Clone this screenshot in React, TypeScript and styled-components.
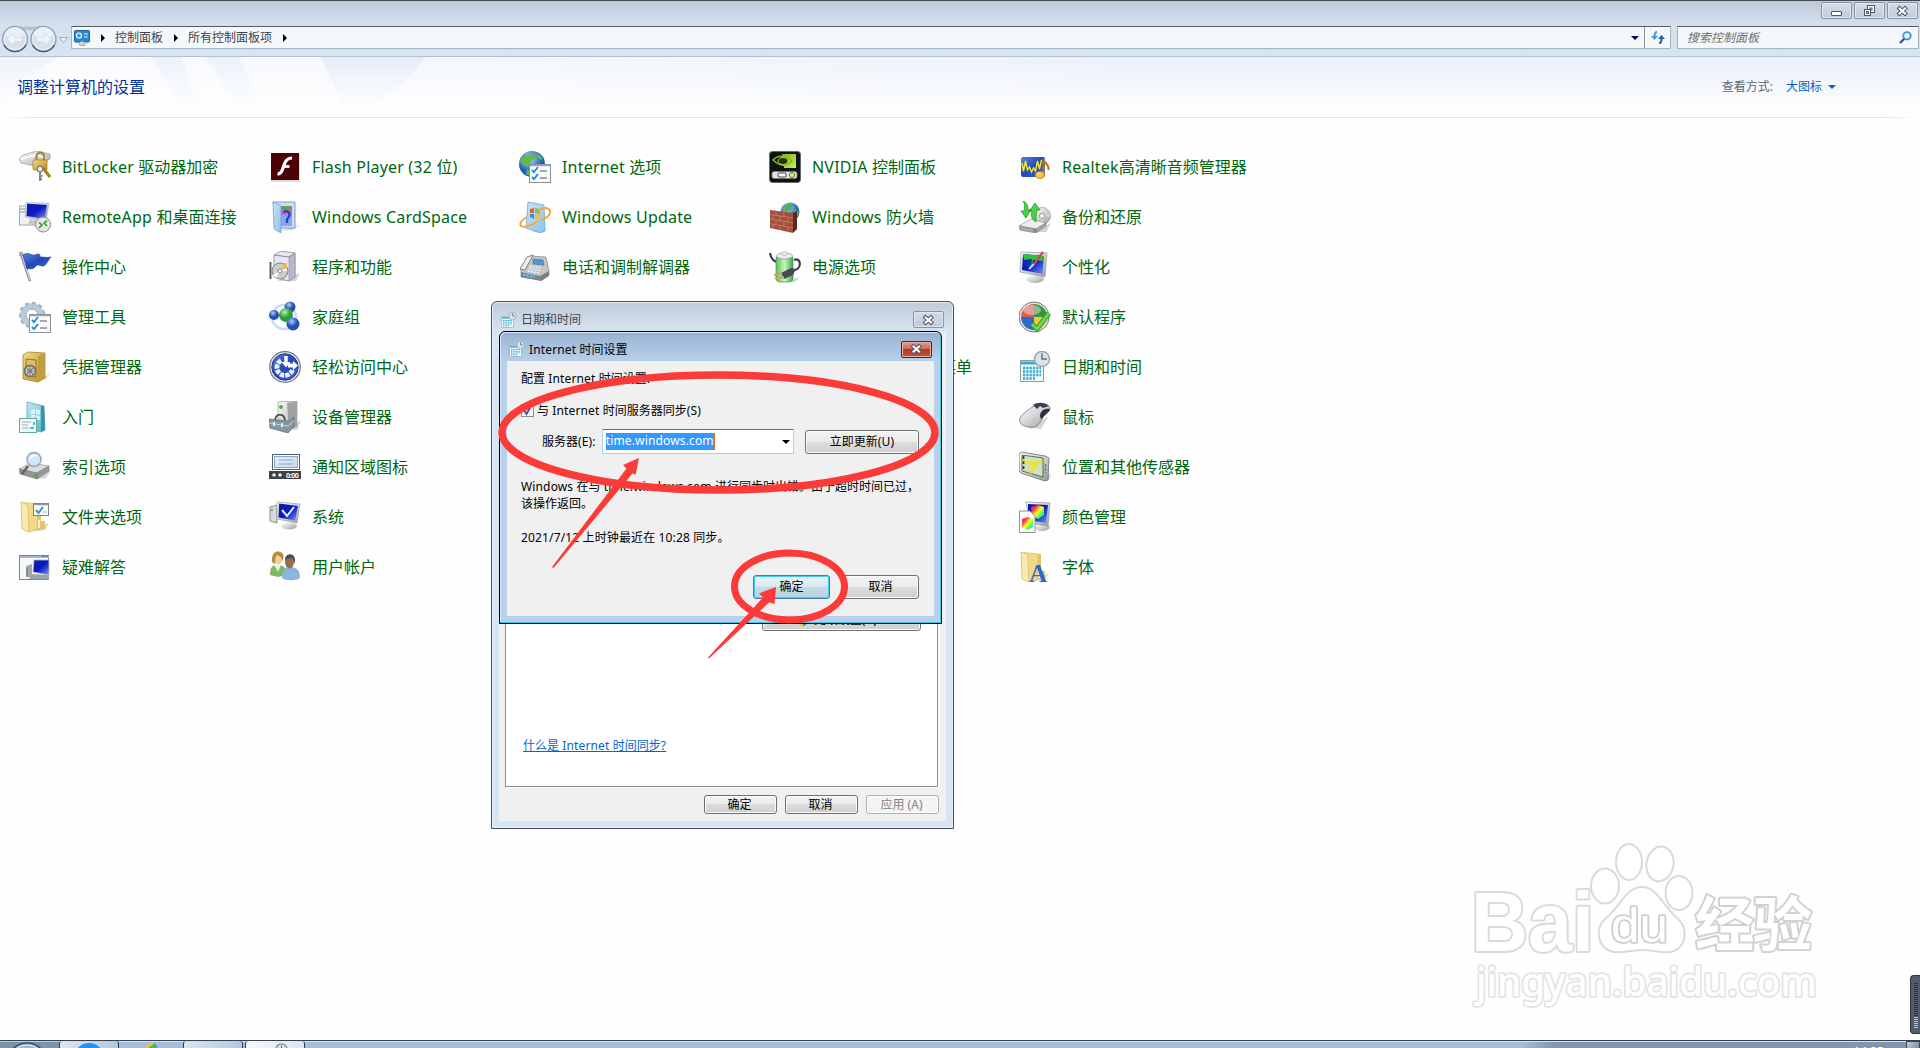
import type { ReactNode } from 'react';
import styled, { createGlobalStyle, css } from 'styled-components';

const fonts = `'Noto Sans', 'Noto Sans CJK SC', sans-serif`;

const icons: Record<string, ReactNode> = {
  bitlocker: (
    <>
      <path d="M0 8 L4 4 L18 0 L31 3 V8 L16 15 L2 12Z" fill="url(#silver)" stroke="#9a9a9a" strokeWidth=".7" />
      <path d="M2 8 L17 4 L27 7" fill="none" stroke="#fff" strokeWidth="1.6" />
      <path d="M17.500 10V5.500a3.800 3.800 0 0 1 7.600 0V10" fill="none" stroke="#a98a38" strokeWidth="2.200" />
      <rect x="14" y="9" width="14" height="10" rx="1" fill="url(#gold)" stroke="#a17b26" strokeWidth=".7" />
      <path d="M24 17 L31 26" stroke="#a87f1d" strokeWidth="3" />
      <circle cx="21" cy="18" r="2.800" fill="#eee" stroke="#777" strokeWidth="1.200" />
      <path d="M21 20V30M21 25h2.500M21 28h2" stroke="#888" strokeWidth="2" />
    </>
  ),
  flash: (
    <>
      <rect x="2" y="3" width="29" height="28" fill="#bbb" opacity=".5" />
      <rect x="2" y="2" width="28" height="27" fill="#4a0204" />
      <path d="M23 7c-6 0-7.500 5-9 10-1 3.500-2 6-5.500 6" fill="none" stroke="#fff" strokeWidth="3.200" />
      <path d="M13.500 15.500h7" stroke="#fff" strokeWidth="2.800" />
    </>
  ),
  internet: (
    <>
      <circle cx="13" cy="13" r="13" fill="url(#globe)" />
      <path d="M5 4c4 2 6-2 10-1l2 4-5 3-3 6-5-2-3-4zM17 2l5 3 2 5-5-3zM8 18l4 2-1 5-4-2z" fill="#63b848" />
      <Checklist />
    </>
  ),
  nvidia: (
    <>
      <rect x=".5" y=".5" width="31" height="31" rx="3" fill="#111" stroke="#666" />
      <path d="M13 3H27V17H15z" fill="url(#lime)" />
      <path d="M4 9q8-8 19 1q-8 9-19-1Z" fill="none" stroke="#86b820" strokeWidth="1.600" />
      <ellipse cx="14" cy="10" rx="5" ry="3.500" fill="#25330b" stroke="#a8d838" />
      <rect x="3" y="20.500" width="25" height="7" rx="2" fill="#e4e4e4" stroke="#777" />
      <rect x="9" y="22" width="8" height="4" rx="1" fill="#fff" stroke="#444" />
      <circle cx="23" cy="24" r="2.600" fill="#cfe9a0" stroke="#4d8c16" />
    </>
  ),
  realtek: (
    <>
      <rect x="2" y="6" width="24" height="20" rx="2" fill="url(#blue)" />
      <path d="M3 12l1.500 8 2-10 2 9 2-3 2 5 2-4 2 3 2-10 2 8 2-9" fill="none" stroke="#eceb2b" strokeWidth="1.400" />
      <path d="M24.500 24V8c1 5 6 5 5 11" fill="none" stroke="#b57a1c" strokeWidth="2" />
      <ellipse cx="21" cy="24" rx="4.500" ry="3.500" fill="url(#amber)" stroke="#b57a1c" strokeWidth=".7" />
    </>
  ),
  remote: (
    <>
      <rect x=".5" y="5" width="22" height="19" fill="#f2f2f2" stroke="#a0a8b0" />
      <path d="M1 8H7M1 11H6" stroke="#a7b3c6" strokeWidth="1.500" />
      <path d="M7 1 30 2.500 27 20 6 16Z" fill="url(#silver)" stroke="#aaa" strokeWidth=".6" />
      <path d="M8 2.500 28 4 25.500 18 7.500 15Z" fill="url(#screen)" />
      <path d="M11 18l9 2 1 6-12-2z" fill="#c4c6c8" />
      <circle cx="24" cy="23.500" r="7.500" fill="#e6e6e6" stroke="#8c8c8c" />
      <path d="M20 21.500l3 2.500-3 3M28 19.500l-3 2.500 3 3" fill="none" stroke="#2c9a2c" strokeWidth="1.600" />
    </>
  ),
  cardspace: (
    <>
      <path d="M9 30 31 24 24 29Z" fill="#bbb" opacity=".5" />
      <path d="M4 1H26V27H8Z" fill="#cfdcf8" stroke="#8098d0" />
      <rect x="11" y="5" width="12" height="4" fill="#5ca64a" />
      <rect x="11" y="9" width="12" height="5" fill="#c86ac4" />
      <path d="M12 14h11v11H12z" fill="#82a9ee" />
      <path d="M15 12c0-3 6-2 5.500 2s-3.500 3-2.500 6v2" fill="none" stroke="#2745b8" strokeWidth="2.400" />
      <path d="M4 1 12 5V32L5 28Z" fill="url(#sky)" stroke="#7f9de0" strokeWidth=".8" />
    </>
  ),
  update: (
    <>
      <path d="M12 31l17-4-5 4z" fill="#aaa" opacity=".5" />
      <path d="M9 1l16 3 1 26-5 2L7 27Z" fill="url(#sky)" stroke="#72a7cc" strokeWidth=".8" />
      <WinFlag x={11} y={7} />
      <path d="M19 10c7-5 13-3 12 2-1 4-6 6-9 7M8 16c-5 3-8 6-6 9 3 2 10 0 17-5" fill="none" stroke="#f3a83c" strokeWidth="2" />
    </>
  ),
  firewall: (
    <>
      <circle cx="21" cy="11" r="9.500" fill="url(#globe)" />
      <path d="M15 4c3 1 5-2 9 0l-2 5-6 2zM26 8l4 3-1 5-4-3z" fill="#58b048" />
      <path d="M1 9 24 12V32L1 27Z" fill="#a34f3d" />
      <path d="M24 12l4-2v18l-4 4z" fill="#5d281e" />
      <path d="M1 13.500 24 17M1 18 24 22M1 22.500 24 27M7 10v4M15 11v5M4 14v4M11 15v5M19 17v5M7 19v4M15 21v4M4 23v4M11 25v4M19 26v5" stroke="#c98a76" strokeWidth=".7" fill="none" />
    </>
  ),
  backup: (
    <>
      <path d="M15 31 32 22 27 31Z" fill="#aaa" opacity=".5" />
      <circle cx="23" cy="15" r="8.500" fill="url(#silver)" stroke="#999" strokeWidth=".7" />
      <path d="M23 15l8-3v4zM23 15l-3 8 4 0z" fill="#e8c6d4" />
      <circle cx="23" cy="15" r="2.500" fill="#fff" stroke="#999" />
      <path d="M0 25 12 18 27 22 17 28Z" fill="#eee" stroke="#999" strokeWidth=".7" />
      <path d="M0 25 17 28V32L1 29Z M17 28 27 22V25L17 32Z" fill="#a9a9a9" stroke="#777" strokeWidth=".6" />
      <path d="M14 28.500h2v2h-2z" fill="#2eb82e" />
      <path d="M4 0c4 1 5 5 5 9l3-1-5 9-5-7 3 0C6 6 6 3 4 0Z M17 21c-5-3-5-7-4-11l-3 1 6-9 5 7-3 0c-1 4-1 8-1 12Z" fill="#4fd04a" stroke="#229a26" strokeWidth=".8" />
    </>
  ),
  flag: (
    <>
      <path d="M2 3 11 30" stroke="#8e9297" strokeWidth="2.600" />
      <path d="M2.500 3 11 29" stroke="#e0e3e6" strokeWidth="1" />
      <circle cx="2" cy="3" r="2" fill="#b5b9bd" stroke="#777" strokeWidth=".6" />
      <path d="M4 4c5-4 8 1 12 0 4-2 5-1 5 2 4 0 7 1 11 0-3 3-5 9-8 9-4 0-5-3-8 1-3 3-5 1-8 2Z" fill="url(#blue)" stroke="#2343a4" strokeWidth=".7" />
    </>
  ),
  programs: (
    <>
      <path d="M8 30l23-8-4 8z" fill="#aaa" opacity=".5" />
      <path d="M5 4 12 0 26 2V26L20 30 5 26Z" fill="#e9e8f2" stroke="#8c8a9c" strokeWidth=".8" />
      <path d="M20 6 26 2V26L20 30Z" fill="#b9b7cc" stroke="#8c8a9c" strokeWidth=".6" />
      <path d="M5 4 20 6 26 2" fill="none" stroke="#8c8a9c" />
      <path d="M1.500 11v17" fill="none" stroke="#555" strokeWidth="1.800" />
      <circle cx="11" cy="20" r="8" fill="#c9cfca" stroke="#7f867f" />
      <path d="M11 20l7-5v5zM11 20l-7 4 3 3z" fill="#fff" />
      <path d="M14 12h4v5l-5 2z" fill="#efb45a" />
      <circle cx="11" cy="20" r="2" fill="#fff" stroke="#888" />
    </>
  ),
  phone: (
    <>
      <path d="M2 17 11 5 27 6 30 20 30 24 23 29 2 26Z" fill="#c3c6c9" stroke="#8d8f92" strokeWidth=".8" />
      <path d="M14 8l10 1 1 5-11-1z" fill="#4a9ade" stroke="#557" strokeWidth=".5" />
      <path d="M8 6 14 4 6 19 1 18Z" fill="#efefef" stroke="#777" strokeWidth=".9" />
      <path d="M11 15l11 2M10 17.500l11 2M9 20l11 2" stroke="#f4f4f4" strokeWidth="1.300" strokeDasharray="2 1" />
      <path d="M2 21 21 25 30 20V25L22 30 2 26Z" fill="#7b8086" />
      <path d="M4 23.500l12 2.500" stroke="#5fb9ea" strokeWidth="2.800" strokeDasharray="2.500 1" />
    </>
  ),
  power: (
    <>
      <path d="M12 31l19-5-5 5z" fill="#aaa" opacity=".5" />
      <path d="M1 2c1 6 3 8 7 9M25 9c7-3 8 8 1 10" fill="none" stroke="#3a3d4d" strokeWidth="2.200" />
      <rect x="7" y="4" width="17" height="27" rx="4" fill="url(#battery)" stroke="#4b9450" strokeWidth=".7" />
      <ellipse cx="15.500" cy="5" rx="8" ry="3" fill="#e8ebf0" stroke="#8b95a0" strokeWidth=".7" />
      <ellipse cx="15.500" cy="2.500" rx="3" ry="1.500" fill="#fff" stroke="#8b95a0" strokeWidth=".7" />
      <path d="M12 22 22 17 27 18 24 24 15 28Z" fill="#464953" />
      <path d="M5 24 13 22M6 27.500 15 26" stroke="#c8a36c" strokeWidth="2.200" />
    </>
  ),
  personalize: (
    <>
      <ellipse cx="16" cy="28" rx="9" ry="4" fill="url(#silver)" />
      <path d="M2 1 28 2 26 26 1 21Z" fill="url(#silver)" stroke="#a1a1a1" strokeWidth=".8" />
      <path d="M4 3 25 5 23.500 23 3 19Z" fill="url(#screen)" />
      <path d="M4 3 25 5 24 10 14 9 13 16 6 14Z" fill="#2fc23a" />
      <path d="M4 9 13 8 12 15 5 14Z" fill="#0b2bb0" />
      <path d="M24 1 15 13" stroke="#d2454e" strokeWidth="2.200" />
      <path d="M15 13 10 18" stroke="#c8d4ea" strokeWidth="2" />
    </>
  ),
  admin: (
    <>
      <circle cx="13" cy="14" r="9" fill="none" stroke="#b9cbdb" strokeWidth="5.500" />
      <circle cx="13" cy="14" r="12" fill="none" stroke="#a2b8cb" strokeWidth="2.500" strokeDasharray="4 3" />
      <circle cx="13" cy="14" r="6" fill="#fff" stroke="#8aa4bc" />
      <Checklist />
    </>
  ),
  homegroup: (
    <>
      <circle cx="15" cy="16" r="12" fill="none" stroke="#c9dcf0" strokeWidth="2.500" />
      <circle cx="21" cy="6" r="5.500" fill="url(#ball)" />
      <circle cx="5" cy="14" r="5" fill="url(#ball)" />
      <circle cx="17" cy="14" r="7" fill="url(#greenBall)" />
      <circle cx="24" cy="23" r="6.500" fill="url(#ball)" />
    </>
  ),
  defaults: (
    <>
      <circle cx="15" cy="16" r="15" fill="#e4e4e4" stroke="#777" />
      <path d="M15 3v13H2A13 13 0 0 1 15 3Z" fill="#e05b4a" />
      <path d="M15 3v13h13A13 13 0 0 0 15 3Z" fill="#3f9040" />
      <path d="M15 29V16H2a13 13 0 0 0 13 13Z" fill="#2d6cc4" />
      <path d="M15 29V16h13a13 13 0 0 1-13 13Z" fill="#f2c934" />
      <ellipse cx="13" cy="9" rx="9" ry="5" fill="#fff" opacity=".4" />
      <path d="M13 23l5 5L30 12" fill="none" stroke="#2a9a22" strokeWidth="5" />
      <path d="M13 23l5 5L30 12" fill="none" stroke="#6cd84e" strokeWidth="3" />
    </>
  ),
  safe: (
    <>
      <path d="M14 31 31 23 26 28Z" fill="#aaa" opacity=".5" />
      <path d="M4 4 9 1 26 2V27L19 31 4 28Z" fill="url(#gold)" stroke="#a48327" strokeWidth=".8" />
      <path d="M19 5V31L26 27V2Z" fill="#c19d42" />
      <path d="M7 8 17 9V26L7 25Z" fill="#dcbf6a" stroke="#91752b" />
      <circle cx="11" cy="20" r="5.500" fill="#ddd" stroke="#77746c" strokeWidth="1.800" />
      <path d="M11 14V26M5 20H17M7 16l8 8M15 16l-8 8" stroke="#817e76" strokeWidth="1.200" />
    </>
  ),
  ease: (
    <>
      <circle cx="16" cy="16" r="15.300" fill="#ececec" stroke="#707478" strokeWidth="1.200" />
      <circle cx="16" cy="16" r="13.200" fill="url(#blue)" stroke="#1a389f" />
      <path d="M12 9.500a8 8 0 1 0 11.500 9.500" fill="none" stroke="#eef3ff" strokeWidth="4.800" strokeDasharray="4.300 1" />
      <path d="M17 5V13" stroke="#fff" strokeWidth="3.500" />
      <path d="M12.500 11h9L17 16.500zM19 12.500h5V10l5 4.500-5 4.500v-2.500h-5z" fill="#fff" />
    </>
  ),
  datetime: <Calendar />,
  start: (
    <>
      <path d="M8 1 25 5 26 29 22 31 8 28Z" fill="url(#teal)" stroke="#5ca9b8" strokeWidth=".8" />
      <path d="M22 5 25 5 26 29 22 31Z" fill="#3596aa" />
      <path d="M12 9l4-1v5h-4zM17 8l4 1v5l-4-1zM12 14h4v5l-4-2zM17 14l4 1v4l-4 0z" fill="#d9f3f7" />
      <rect x=".5" y="17.500" width="17" height="14" fill="#eef8f8" stroke="#6aa6a0" />
      <path d="M3 21h9M3 24h6M3 27h7" stroke="#9caead" />
      <path d="M14 21h2v3h-2zM11 26h4v2h-4z" fill="#3dc8e8" />
    </>
  ),
  device: (
    <>
      <path d="M20 28l12-9-4 10z" fill="#aaa" opacity=".5" />
      <path d="M9 1 28 0V25L20 29 9 26Z" fill="url(#silver)" stroke="#999" strokeWidth=".7" />
      <path d="M18 2 28 0V25L20 29Z" fill="#a2a2a2" />
      <circle cx="12" cy="6" r="2" fill="#46b52c" />
      <path d="M6 19c1-7 9-7 10 0" fill="none" stroke="#3b3b3b" strokeWidth="1.600" />
      <path d="M0 18 19 20 25 16V25L19 32 1 27Z" fill="#8398a4" stroke="#576a76" strokeWidth=".7" />
      <path d="M0 22 19 25 25 20" fill="none" stroke="#c6d3da" />
      <path d="M5 21v4M13 22v4" stroke="#e8edef" strokeWidth="2" />
    </>
  ),
  mouse: (
    <>
      <path d="M8 27l22-12-8 13z" fill="#999" opacity=".4" />
      <path d="M15 5c4-4 17-2 16 3-1 4-6 5-8 10-3 7-7 9-13 8C3 25-1 22 1 17 4 12 9 9 15 5Z" fill="url(#silver)" stroke="#777" strokeWidth=".8" />
      <path d="M31 8c-6-1-9 2-10 6 0 3 1 4 2 4 2-4 7-6 8-10Z" fill="#2c3044" />
      <path d="M14 4c4-3 12-3 16 1l-6 2-3-2-3 3z" fill="#3c4054" />
    </>
  ),
  index: (
    <>
      <path d="M18 28l14-9-5 8z" fill="#aaa" opacity=".5" />
      <path d="M0 18 12 12 30 15 18 22Z" fill="#dcdcdc" stroke="#999" strokeWidth=".7" />
      <path d="M0 18 18 22V28L1 23Z M18 22 30 15V20L18 28Z" fill="#969696" stroke="#757575" strokeWidth=".6" />
      <path d="M14.500 23h2v3h-2z" fill="#4db52c" />
      <circle cx="15" cy="8.500" r="7" fill="#cfe6fb" fillOpacity=".9" stroke="#97a6b4" strokeWidth="1.500" />
      <path d="M11 8c1-3 4-4 7-3" fill="none" stroke="#fff" strokeWidth="1.500" />
      <path d="M9 15 3 23" stroke="#606468" strokeWidth="2.500" />
    </>
  ),
  notify: (
    <>
      <rect x="3.500" y="3.500" width="27" height="15" fill="#fff" stroke="#4d5e78" />
      <rect x="5.500" y="5.500" width="23" height="11" fill="url(#pale)" stroke="#8fa4c0" />
      <path d="M10 9h14M10 13h14" stroke="#8aa6cc" />
      <rect x="0" y="20" width="32" height="8" fill="#3e4146" />
      <circle cx="5" cy="24" r="1.800" fill="#eee" />
      <circle cx="11" cy="24" r="1.800" fill="#eee" />
      <text x="17" y="27" fontSize="7.500" fontFamily="Liberation Sans" fontWeight="700" fill="#fff" textLength="13">0:00</text>
    </>
  ),
  sensors: (
    <>
      <path d="M24 30l8-8-1 6z" fill="#aaa" opacity=".5" />
      <path d="M2 1 26 5 30 7 29 29 26 30 2 22 0 20V4Z" fill="url(#silver)" stroke="#777" strokeWidth=".9" />
      <path d="M3 4 24 7V26L3 20Z" fill="#cfe2b8" stroke="#454a44" strokeWidth=".8" />
      <path d="M3 10 14 13 23 10M19 11 11 22" fill="none" stroke="#f2e12c" strokeWidth="2.800" />
      <path d="M4.500 5v15" stroke="#3a4038" strokeWidth="1.800" strokeDasharray="3 2" />
      <path d="M26.500 13v9" stroke="#777" strokeWidth="1.500" strokeDasharray="3 1" />
    </>
  ),
  folder: (
    <>
      <path d="M8 31l22-9-4 7z" fill="#aaa" opacity=".5" />
      <Folder />
      <rect x="14.500" y="2.500" width="15" height="12" fill="#fbfbfb" stroke="#77808c" />
      <path d="M15 3.500h15" stroke="#8d96a8" strokeWidth="1.500" />
      <path d="M17 9l2.500 3L24 6" fill="none" stroke="#2b9ad2" strokeWidth="2" />
      <path d="M24 11h4" stroke="#aaa" />
    </>
  ),
  system: (
    <>
      <path d="M1 6 8 4V22L1 20Z" fill="#d8d8d8" stroke="#777" strokeWidth=".8" />
      <circle cx="3" cy="9" r="1" fill="#3cb52c" />
      <ellipse cx="20" cy="25" rx="8" ry="3.500" fill="url(#silver)" />
      <path d="M8 1 31 3 28 22 8 18Z" fill="url(#silver)" stroke="#a0a0a0" strokeWidth=".7" />
      <path d="M10 2.500 29 5 26 19.500 9.500 16.500Z" fill="url(#screen)" />
      <path d="M13 9l5 6 7-9" fill="none" stroke="#e7edfb" strokeWidth="2" />
    </>
  ),
  color: (
    <>
      <ellipse cx="23" cy="26" rx="8" ry="4" fill="url(#silver)" />
      <path d="M7 1 31 2 29 25 12 22Z" fill="url(#silver)" stroke="#999" strokeWidth=".8" />
      <path d="M9 3 29 4 27 22 9 19Z" fill="url(#screen)" />
      <path d="M12 6 19 4 25 6V14L19 18 13 15Z" fill="url(#rainbow)" />
      <path d="M.5 10H11L16 15V31.500H.5Z" fill="#fdfdfd" stroke="#888" strokeWidth=".9" />
      <path d="M3 18 9 16 14 18V26L9 29 3 26Z" fill="url(#rainbow)" />
    </>
  ),
  trouble: (
    <>
      <rect x=".5" y="4.500" width="29" height="24" fill="#f7f8fa" stroke="#7c848e" />
      <path d="M1 6h29" stroke="#a9b7cc" strokeWidth="2" />
      <path d="M23 5.500h6" stroke="#5a6a85" strokeDasharray="1.500 1" />
      <path d="M7 15l6-2v13H7z" fill="#a5a5a5" />
      <path d="M8 17v8" stroke="#4a8c4a" />
      <path d="M15 9H30V24L14 21Z" fill="url(#screen)" stroke="#bbb" strokeWidth=".8" />
      <path d="M12 23l18 1v4H10z" fill="#9ba3ad" />
    </>
  ),
  users: (
    <>
      <path d="M1 24c0-9 3-10 8-10s8 2 8 10l-8 2Z" fill="#7fb765" />
      <path d="M5 14l4 7 3-7z" fill="#e8f2dc" />
      <ellipse cx="9" cy="7" rx="5" ry="6.500" fill="#f0cf9d" />
      <path d="M3 11C2 0 9-1 13 2c3 3 1 7 0 8 0-4-3-5-5-6-2 2-2 6-2 9Z" fill="#b3913d" />
      <path d="M13 27c0-9 3-11 9-11s9 4 9 11c-3 3-15 3-18 0Z" fill="#88b5e1" />
      <ellipse cx="20.500" cy="11" rx="4.500" ry="6.500" fill="#9c6b48" />
      <path d="M16 9c0-7 9-8 10-1v5c-1-4-2-5-4-6-2 0-4 1-6 2Z" fill="#4b4c4e" />
    </>
  ),
  fonts: (
    <>
      <path d="M8 31l22-9-4 7z" fill="#aaa" opacity=".4" />
      <Folder />
      <text x="10" y="31" fontSize="25" fontFamily="Liberation Serif" fontWeight="700" fill="#2869d0">A</text>
    </>
  ),
};

interface Entry {
  icon: string;
  label: string;
}

// null keeps the cell of an entry that lies behind the open dialogs
const columns: (Entry | null)[][] = [
  [
    { icon: 'bitlocker', label: 'BitLocker 驱动器加密' },
    { icon: 'remote', label: 'RemoteApp 和桌面连接' },
    { icon: 'flag', label: '操作中心' },
    { icon: 'admin', label: '管理工具' },
    { icon: 'safe', label: '凭据管理器' },
    { icon: 'start', label: '入门' },
    { icon: 'index', label: '索引选项' },
    { icon: 'folder', label: '文件夹选项' },
    { icon: 'trouble', label: '疑难解答' },
  ],
  [
    { icon: 'flash', label: 'Flash Player (32 位)' },
    { icon: 'cardspace', label: 'Windows CardSpace' },
    { icon: 'programs', label: '程序和功能' },
    { icon: 'homegroup', label: '家庭组' },
    { icon: 'ease', label: '轻松访问中心' },
    { icon: 'device', label: '设备管理器' },
    { icon: 'notify', label: '通知区域图标' },
    { icon: 'system', label: '系统' },
    { icon: 'users', label: '用户帐户' },
  ],
  [
    { icon: 'internet', label: 'Internet 选项' },
    { icon: 'update', label: 'Windows Update' },
    { icon: 'phone', label: '电话和调制解调器' },
  ],
  [
    { icon: 'nvidia', label: 'NVIDIA 控制面板' },
    { icon: 'firewall', label: 'Windows 防火墙' },
    { icon: 'power', label: '电源选项' },
    null,
    { icon: 'notify', label: '任务栏和「开始」菜单' },
  ],
  [
    { icon: 'realtek', label: 'Realtek高清晰音频管理器' },
    { icon: 'backup', label: '备份和还原' },
    { icon: 'personalize', label: '个性化' },
    { icon: 'defaults', label: '默认程序' },
    { icon: 'datetime', label: '日期和时间' },
    { icon: 'mouse', label: '鼠标' },
    { icon: 'sensors', label: '位置和其他传感器' },
    { icon: 'color', label: '颜色管理' },
    { icon: 'fonts', label: '字体' },
  ],
];

export default function App() {
  return (
    <>
      <GlobalStyle />
      <Gradients />
      <Desktop>
        <TitleBar>
          <CaptionButton><CaptionGlyph kind="min" /></CaptionButton>
          <CaptionButton><CaptionGlyph kind="restore" /></CaptionButton>
          <CaptionButton><CaptionGlyph kind="close" /></CaptionButton>
        </TitleBar>
        <NavBar>
          <TravelButtons />
          <AddressBar>
            <Crumbs>
              <svg width="16" height="16" viewBox="0 0 16 16">
                <rect x=".5" y=".5" width="15" height="11.500" rx="1" fill="#2d8ad0" stroke="#1d5f9c" />
                <circle cx="5" cy="5.500" r="2.500" fill="none" stroke="#fff" strokeWidth="1.200" />
                <path d="M5 5.500V3l2.500 2.500z" fill="#f5a623" />
                <path d="M10 4h4M10 7h4" stroke="#d8ecfb" />
                <path d="M5 13.500c0-3 6-3 6 0v2H6z" fill="#d5d5d5" stroke="#888" strokeWidth=".6" />
              </svg>
              <CrumbArrow />
              <span>控制面板</span>
              <CrumbArrow />
              <span>所有控制面板项</span>
              <CrumbArrow />
            </Crumbs>
            <DownArrow $color="#000050" />
            <Refresh>
              <svg width="14" height="13" viewBox="0 0 14 13">
                <path d="M6 1C3.500 1 3.500 3 3.500 5.500" fill="none" stroke="#3f9ad8" strokeWidth="2" />
                <path d="M0 5h7L3.500 9z" fill="#3f9ad8" />
                <path d="M8 12c2.500 0 2.500-2 2.500-5" fill="none" stroke="#2d4fa8" strokeWidth="2" />
                <path d="M7 8h7l-3.500-4z" fill="#2d5fb0" />
              </svg>
            </Refresh>
          </AddressBar>
          <SearchBox>
            <span>搜索控制面板</span>
            <svg width="13" height="13" viewBox="0 0 13 13">
              <circle cx="8" cy="4.800" r="3.700" fill="#eaf5fd" stroke="#4596cf" strokeWidth="1.900" />
              <path d="M5.200 7.800 1 12" stroke="#2c4fa0" strokeWidth="2.200" />
            </svg>
          </SearchBox>
        </NavBar>
        <Banner>
          <Swoosh viewBox="0 0 480 60">
            <path d="M0 0H60Q20 20 0 60Z" fill="url(#haze)" opacity=".6" />
            <path d="M150 0H181Q188 22 204 60H180Q170 25 150 0Z" fill="url(#haze)" opacity=".7" />
            <path d="M205 0H239Q250 25 266 60H236Q225 25 205 0Z" fill="url(#haze)" opacity=".7" />
            <path d="M320 0H425Q400 40 345 60Q335 25 320 0Z" fill="url(#haze)" />
          </Swoosh>
          <PageTitle>调整计算机的设置</PageTitle>
          <ViewBy>
            查看方式:
            <ViewLink>大图标 <DownArrow $color="#0066cc" /></ViewLink>
          </ViewBy>
        </Banner>
        <Divider />
        <Items>
          {columns.map((column, i) => (
            <Column key={i}>
              {column.map((entry, j) =>
                entry ? (
                  <Item key={j}>
                    <svg width="32" height="32" viewBox="0 0 32 32">{icons[entry.icon]}</svg>
                    <Mixed text={entry.label} />
                  </Item>
                ) : (
                  <Item key={j} />
                )
              )}
            </Column>
          ))}
        </Items>
        <Taskbar>
          <StartArea>
            <svg width="32" height="7" viewBox="0 0 32 7">
              <ellipse cx="16" cy="15" rx="17" ry="14" fill="#9fb6cc" stroke="#2c5278" strokeWidth="1.500" />
              <ellipse cx="16" cy="15" rx="15" ry="12" fill="none" stroke="#e3eef8" />
            </svg>
          </StartArea>
          <TaskButton $width={60} $lit>
            <svg width="24" height="5" viewBox="0 0 24 5"><ellipse cx="12" cy="11" rx="13" ry="11" fill="#2390ee" /></svg>
          </TaskButton>
          <TaskButton $width={64}>
            <svg width="18" height="5" viewBox="0 0 18 6"><path d="M0 6 6 2 14 0V6Z" fill="#f0c62e" /><path d="M6 6 14 0 17 6Z" fill="#3db86a" /></svg>
          </TaskButton>
          <TaskButton $width={60} $lit />
          <TaskGap />
          <TaskButton $width={60} $lit $bright>
            <TaskIcon width="13" height="5" viewBox="0 0 13 5"><circle cx="6.500" cy="6.500" r="5.500" fill="#dde3e8" stroke="#8c979f" strokeWidth="1.500" /><path d="M6.500 2.500v3" stroke="#667" /></TaskIcon>
          </TaskButton>
          <Tray>
            <Clock>14:35</Clock>
            <ShowDesktop />
          </Tray>
        </Taskbar>

        <DateTimeDialog>
          <DialogTitle>
            <svg width="16" height="16" viewBox="0 0 32 32"><Calendar /></svg>
            <TitleText>日期和时间</TitleText>
            <CloseButton><CaptionGlyph kind="close" /></CloseButton>
          </DialogTitle>
          <DialogBody>
            <TabPanel>
              <ChangeButton>
                <svg width="14" height="14" viewBox="0 0 14 14">
                  <path d="M7 0 13 2v5c0 4-3 6-6 7-3-1-6-3-6-7V2z" fill="#3c79d0" />
                  <path d="M7 0v14C4 13 1 11 1 7h12V2z" fill="#f3cf3a" />
                </svg>
                <Mixed text="更改设置(C)..." />
              </ChangeButton>
              <HelpLink><Mixed text="什么是 Internet 时间同步?" /></HelpLink>
            </TabPanel>
            <DialogButtons>
              <SmallButton>确定</SmallButton>
              <SmallButton>取消</SmallButton>
              <SmallButton $disabled>应用 (A)</SmallButton>
            </DialogButtons>
          </DialogBody>
        </DateTimeDialog>

        <TimeSettingsDialog>
          <DialogTitle $active>
            <svg width="16" height="16" viewBox="0 0 32 32"><Calendar /></svg>
            <TitleText><Mixed text="Internet 时间设置" /></TitleText>
            <CloseButton $active><CaptionGlyph kind="close" /></CloseButton>
          </DialogTitle>
          <SettingsBody>
            <p><Mixed text="配置 Internet 时间设置:" /></p>
            <CheckRow>
              <svg width="13" height="13" viewBox="0 0 13 13">
                <rect x=".5" y=".5" width="12" height="12" fill="#eef0f3" stroke="#8e8f8f" />
                <path d="M3 6l2.500 4L10 2" fill="none" stroke="#3b4fa0" strokeWidth="1.800" />
              </svg>
              <Mixed text="与 Internet 时间服务器同步(S)" />
            </CheckRow>
            <ServerRow>
              <ServerLabel><Mixed text="服务器(E):" /></ServerLabel>
              <Combo>
                <Selected>time.windows.com</Selected>
                <DownArrow $color="#000" />
              </Combo>
              <UpdateButton><Mixed text="立即更新(U)" /></UpdateButton>
            </ServerRow>
            <Status>
              <Mixed text="Windows 在与 time.windows.com 进行同步时出错。由于超时时间已过，" />
              <br />
              该操作返回。
            </Status>
            <LastSync><Mixed text="2021/7/12 上时钟最近在 10:28 同步。" /></LastSync>
            <SettingsButtons>
              <DialogButton $default>确定</DialogButton>
              <DialogButton>取消</DialogButton>
            </SettingsButtons>
          </SettingsBody>
        </TimeSettingsDialog>

        <Annotations />
        <Watermark />
        <VolumeMeter>
          {Array.from({ length: 23 }, (_, i) => (
            <MeterBar key={i} $on={i > 16} />
          ))}
        </VolumeMeter>
      </Desktop>
    </>
  );
}

// Latin runs are set slightly looser than the CJK around them
function Mixed({ text }: { text: string }) {
  return (
    <span>
      {text.split(/([\x20-\x7e]+)/).map((run, i) => (i % 2 ? <Latin key={i}>{run}</Latin> : run))}
    </span>
  );
}

function Gradients() {
  const stops: Record<string, string[]> = {
    silver: ['#ffffff', '#d2d4d6', '#989a9c'],
    gold: ['#f3dc8e', '#d8b548', '#b38c2a'],
    amber: ['#ffe27a', '#f3a71e'],
    lime: ['#7cb518', '#c8ee5a'],
    blue: ['#5c84dc', '#2447b8', '#3e67d8'],
    screen: ['#0a1ea8', '#0d18c4', '#6f9df0'],
    sky: ['#c9e4f8', '#8fc0ea'],
    battery: ['#5cbf5c', '#c5f5bb', '#3fa846'],
    teal: ['#c4ecf2', '#4fb4c8'],
    pale: ['#e9f0fa', '#c6d8f0'],
    rainbow: ['#f0f', '#f33', '#ff3', '#3f6', '#3cf'],
  };
  return (
    <DefsHolder>
      <defs>
        {Object.entries(stops).map(([id, colors]) => (
          <linearGradient key={id} id={id} x1="0" y1="0" x2="1" y2={id === 'battery' ? '0' : '1'}>
            {colors.map((c, i) => (
              <stop key={i} offset={i / (colors.length - 1)} stopColor={c} />
            ))}
          </linearGradient>
        ))}
        <linearGradient id="haze" x1="0" y1="0" x2="0" y2="1">
          <stop offset="0" stopColor="#e6edf9" />
          <stop offset="1" stopColor="#f6f9fd" stopOpacity="0" />
        </linearGradient>
        <radialGradient id="globe" cx=".4" cy=".3">
          <stop offset="0" stopColor="#a8dcf8" />
          <stop offset="1" stopColor="#1d5cb8" />
        </radialGradient>
        <radialGradient id="ball" cx=".4" cy=".3">
          <stop offset="0" stopColor="#b4cdf5" />
          <stop offset=".8" stopColor="#2450b4" />
        </radialGradient>
        <radialGradient id="greenBall" cx=".4" cy=".3">
          <stop offset="0" stopColor="#b6efb0" />
          <stop offset=".8" stopColor="#2b9c38" />
        </radialGradient>
      </defs>
    </DefsHolder>
  );
}

function Checklist() {
  return (
    <>
      <rect x="10.500" y="13.500" width="21" height="18" fill="#fafafa" stroke="#8a8f96" />
      <path d="M11 14.500h20" stroke="#9aa4b4" strokeWidth="1.500" />
      <path d="M13 19l2 2 4-5M13 26l2 2 4-5" fill="none" stroke="#2a8fc8" strokeWidth="1.900" />
      <path d="M21 20h7M21 27h7" stroke="#8c8c9c" strokeWidth="1.300" />
    </>
  );
}

function Folder() {
  return (
    <>
      <path d="M10 2 22 3V20H26V28L12 30Z" fill="#e3c568" />
      <path d="M2 1 9 4 10 31 3 28Z" fill="#f9ebb0" stroke="#cdb260" strokeWidth=".7" />
      <path d="M4 1 19 3 18 28 10 31 9 4Z" fill="#f3da88" stroke="#d9bf69" strokeWidth=".5" />
      <path d="M20 19v8" stroke="#fff" strokeWidth="1.500" />
    </>
  );
}

function Calendar() {
  return (
    <>
      <rect x="1.500" y="9.500" width="23" height="21" fill="#f2fafc" stroke="#8c9ca4" />
      <path d="M2 12h22" stroke="#3aa9cc" strokeWidth="3" />
      <path d="M4 17h18M4 20.500h18M4 24h18M4 27.500h12" stroke="#36a6c8" strokeWidth="2.300" strokeDasharray="2.200 1.100" />
      <circle cx="23" cy="8" r="7.500" fill="#dbe4ea" stroke="#9aa7b0" strokeWidth="1.500" />
      <path d="M23 2.500V8h5" fill="none" stroke="#5f7482" strokeWidth="1.500" />
    </>
  );
}

function WinFlag({ x, y }: { x: number; y: number }) {
  return (
    <g transform={`translate(${x} ${y})`}>
      <path d="M0 1l4-1v5H0z" fill="#e2603a" />
      <path d="M5 0l5 1v5L5 5z" fill="#8cc04a" />
      <path d="M0 6h4v5l-4-2z" fill="#3e8edc" />
      <path d="M5 6l5 1v4l-5 0z" fill="#f4c03c" />
    </g>
  );
}

function CaptionGlyph({ kind }: { kind: 'min' | 'restore' | 'close' }) {
  return (
    <svg width="13" height="12" viewBox="0 0 13 12">
      {kind === 'min' && <rect x="1.500" y="6.500" width="10" height="4" rx=".5" fill="#fff" stroke="#535666" />}
      {kind === 'restore' && (
        <g fill="#fff" stroke="#535666">
          <rect x="4.500" y=".5" width="7" height="7" />
          <rect x="7" y="3" width="2" height="2" />
          <rect x="1.500" y="4.500" width="6" height="6" />
          <rect x="3.500" y="6.500" width="2" height="2" />
        </g>
      )}
      {kind === 'close' && (
        <>
          <path d="M2 2l8.500 8M10.500 2l-8.500 8" stroke="#535666" strokeWidth="4.200" />
          <path d="M2.800 2.800l7 6.400M9.800 2.800l-7 6.400" stroke="#fff" strokeWidth="2.200" />
        </>
      )}
    </svg>
  );
}

function CrumbArrow() {
  return (
    <ArrowSvg width="4" height="8" viewBox="0 0 4 8">
      <path d="M0 0 4 4 0 8Z" fill="#000" />
    </ArrowSvg>
  );
}

function TravelButtons() {
  return (
    <svg width="71" height="30" viewBox="0 23 71 30">
      <path d="M12 25.500H48Q30 33 12 25.500Z" fill="#b4c2d0" />
      {[15, 43.5].map((x) => (
        <g key={x}>
          <circle cx={x} cy="38" r="12.500" fill="#d2dde8" stroke="#96a3b2" strokeWidth="1.500" />
          <circle cx={x} cy="37.500" r="11" fill="#d6e0eb" stroke="#eef3f8" />
          <ellipse cx={x} cy="32.500" rx="9" ry="5.500" fill="#e9eff6" />
          <path d={`M${x - 11} 44a12.500 12.500 0 0 0 22 0`} fill="none" stroke="#4d5663" strokeWidth="1.300" />
        </g>
      ))}
      <path d="M7 38.500l7-6v4h8v4h-8v4z" fill="#eef3f8" stroke="#d0dae5" strokeWidth=".7" />
      <path d="M51.500 38.500l-7-6v4h-8v4h8v4z" fill="#eef3f8" stroke="#d0dae5" strokeWidth=".7" />
      <path d="M59.500 36.500h8l-4 5z" fill="#eef3f8" stroke="#9facba" />
    </svg>
  );
}

function Annotations() {
  return (
    <Overlay width="470" height="320" viewBox="490 360 470 320">
      <ellipse cx="718.500" cy="432.500" rx="216.500" ry="57.500" fill="none" stroke="#fb3b38" strokeWidth="7.500" />
      <ellipse cx="789.500" cy="586.500" rx="55" ry="33.500" fill="none" stroke="#fb3b38" strokeWidth="7" />
      <path d="M639 458 623 465 626.500 468.500 552 567 553.500 568 632.500 473.500 635.700 474.500Z" fill="#fb3b38" />
      <path d="M776 587 759 593.500 763 597.500 708 657.500 709 658.500 769 602.500 774.500 604Z" fill="#fb3b38" />
    </Overlay>
  );
}

function Watermark() {
  return (
    <Mark width="360" height="180" viewBox="1465 835 360 180">
      <g fill="#fff" stroke="#dadada" strokeWidth="2" strokeLinejoin="round">
        <g fontFamily="Liberation Sans, Noto Sans CJK SC, sans-serif" fontWeight="700" strokeWidth="4" paintOrder="stroke">
          <text x="1471" y="951" fontSize="84" textLength="123" lengthAdjust="spacingAndGlyphs">Bai</text>
          <text x="1695" y="946" fontSize="59" textLength="117" stroke="#d2d2d2">经验</text>
          <text x="1476" y="996" fontSize="40" fontFamily="Noto Sans" fontWeight="500" textLength="341" lengthAdjust="spacingAndGlyphs" stroke="#e3e3e3" strokeWidth="3.500">jingyan.baidu.com</text>
        </g>
        <ellipse cx="1605" cy="886" rx="14" ry="17.500" />
        <ellipse cx="1629" cy="862" rx="13" ry="18" />
        <ellipse cx="1660" cy="864" rx="13.500" ry="17.500" transform="rotate(10 1660 864)" />
        <ellipse cx="1679" cy="893" rx="13.500" ry="17" />
        <path d="M1642 887c15 0 22 20 35 31 12 10 9 28-3 33-9 4-20-1-32-1s-23 5-32 1c-12-5-16-22-4-33 14-11 20-31 36-31Z" />
        <text x="1611" y="942" fontSize="48" fontFamily="Liberation Sans" textLength="57" lengthAdjust="spacingAndGlyphs" stroke="#cfcfcf" strokeWidth="3.500" paintOrder="stroke">du</text>
      </g>
    </Mark>
  );
}

const GlobalStyle = createGlobalStyle`
  body {
    margin: 0;
    overflow: hidden;
    background: #fff;
    font: 12px/17px ${fonts};
  }

  p {
    margin: 0;
  }

  svg {
    display: block;
    flex: none;
  }
`;

const Latin = styled.span`
  letter-spacing: 0.012em;
  white-space: pre;
`;

const DefsHolder = styled.svg`
  position: absolute;
  width: 0;
  height: 0;
`;

const Desktop = styled.div`
  position: relative;
  display: flex;
  flex-direction: column;
  width: 1920px;
  height: 1048px;
  overflow: hidden;
  background: #fefefe;
`;

const TitleBar = styled.div`
  display: flex;
  justify-content: flex-end;
  gap: 2px;
  height: 24px;
  box-sizing: border-box;
  padding: 1px 2px 0 0;
  border-top: 1px solid #46484c;
  background: linear-gradient(#bdc9d8, #d4e0ee);
`;

const CaptionButton = styled.div`
  display: flex;
  align-items: center;
  justify-content: center;
  width: 31px;
  height: 17px;
  box-sizing: border-box;
  border: 1px solid #8793a8;
  border-radius: 2px;
  background: linear-gradient(#d3dce8, #c0ccdb);
  box-shadow: inset 0 0 0 1px #e0e8f1;
`;

const NavBar = styled.div`
  display: flex;
  height: 33px;
  box-sizing: border-box;
  padding: 2px 1px 0 0;
  border-bottom: 1px solid #b4c1d0;
  background: linear-gradient(#d4e0ee, #d6e5f3);

  > svg {
    margin-top: -2px;
  }
`;

const AddressBar = styled.div`
  display: flex;
  align-items: center;
  flex: 1;
  height: 23px;
  box-sizing: border-box;
  border: 1px solid #a8b2bd;
  border-top-color: #575c63;
  background: #f5f8fb;
  color: #3f4349;
`;

const Crumbs = styled.div`
  display: flex;
  align-items: center;
  flex: 1;
  padding-left: 2px;
`;

const ArrowSvg = styled.svg`
  margin: 0 10px 0 11px;

  &:first-of-type {
    margin: 0 10px 0 9px;
  }
`;

const DownArrow = styled.i<{ $color: string }>`
  display: inline-block;
  border: 4px solid transparent;
  border-top-color: ${({ $color }) => $color};
  border-bottom: 0;
`;

const Refresh = styled.div`
  display: flex;
  align-items: center;
  justify-content: center;
  width: 25px;
  height: 100%;
  margin-left: 5px;
  border-left: 1px solid #8a9098;
`;

const SearchBox = styled.div`
  display: flex;
  align-items: center;
  justify-content: space-between;
  width: 242px;
  height: 23px;
  margin-left: 6px;
  padding: 0 6px 0 9px;
  box-sizing: border-box;
  border: 1px solid #a8b2bd;
  border-top-color: #575c63;
  background: #f5f8fb;
  color: #6d6d6d;
  font-style: italic;
`;

const Banner = styled.div`
  position: relative;
  display: flex;
  align-items: center;
  justify-content: space-between;
  height: 60px;
  padding: 0 84px 0 17px;
  background: linear-gradient(90deg, rgba(255, 255, 255, 0.75), transparent 60%),
    linear-gradient(#ebf1fb, #fefefe 95%);
`;

const Swoosh = styled.svg`
  position: absolute;
  left: 0;
  top: 0;
  width: 480px;
  height: 60px;
`;

const PageTitle = styled.h1`
  position: relative;
  margin: 0;
  color: #003399;
  font-size: 16px;
  font-weight: 400;
`;

const ViewBy = styled.div`
  display: flex;
  gap: 13px;
  margin-top: -1px;
  color: #5a6678;
`;

const ViewLink = styled.span`
  display: flex;
  align-items: center;
  gap: 6px;
  color: #0066cc;
`;

const Divider = styled.div`
  height: 1px;
  background: linear-gradient(90deg, #fefefe, #d8e3f2 40px, #d8e3f2 1880px, #fefefe);
`;

const Items = styled.div`
  display: grid;
  grid-template-columns: repeat(5, 250px);
  flex: 1;
  padding: 24px 0 0 19px;
`;

const Column = styled.div`
  display: flex;
  flex-direction: column;
`;

const Item = styled.div`
  display: flex;
  align-items: center;
  gap: 11px;
  height: 50px;
  color: #006611;
  font-size: 16px;
  white-space: nowrap;
`;

const Taskbar = styled.div`
  display: flex;
  height: 8px;
  box-sizing: border-box;
  border-top: 1px solid #36424f;
  box-shadow: inset 0 1px #d5e2ef;
  background: linear-gradient(90deg, #a6bedc 1520px, #8295ad 1555px);
`;

const StartArea = styled.div`
  display: flex;
  justify-content: center;
  width: 59px;
  padding: 1px 5px 0 0;
  box-sizing: border-box;
  overflow: hidden;
  background: #7f92aa;
  box-shadow: inset 0 1px #bccbda;
`;

const TaskButton = styled.div<{ $width: number; $lit?: boolean; $bright?: boolean }>`
  display: flex;
  align-items: flex-end;
  justify-content: center;
  width: ${({ $width }) => $width}px;
  box-sizing: border-box;
  overflow: hidden;

  ${({ $lit, $bright }) =>
    $lit &&
    css`
      border: 1px solid #2f3c4c;
      border-width: 0 1px;
      border-radius: 3px 3px 0 0;
      background: ${$bright ? 'linear-gradient(100deg, #f4f7fa, #dbe5ef)' : 'linear-gradient(100deg, #dce5f0, #b4c8e0)'};
    `}
`;

const TaskIcon = styled.svg`
  margin-left: 13px;
`;

const TaskGap = styled.div`
  width: 2px;
`;

const Tray = styled.div`
  display: flex;
  align-items: flex-start;
  gap: 22px;
  height: 7px;
  margin-left: auto;
  overflow: hidden;
`;

const Clock = styled.span`
  margin-top: 2px;
  color: #fff;
`;

const ShowDesktop = styled.div`
  width: 14px;
  height: 7px;
  box-sizing: border-box;
  border: 1px solid #3c4654;
  border-bottom: 0;
  background: linear-gradient(120deg, #c3cdd9, #7f8b9b);
`;

const DialogFrame = styled.div`
  position: absolute;
  display: flex;
  flex-direction: column;
  box-sizing: border-box;
  padding: 0 7px 7px;
  border-radius: 6px 6px 0 0;
`;

const DateTimeDialog = styled(DialogFrame)`
  left: 491px;
  top: 301px;
  width: 463px;
  height: 528px;
  border: 1px solid #4b5058;
  background: linear-gradient(#c0cbd9, #d7e4f2 30px);
  box-shadow: inset 0 0 0 1px #e6eef7;
`;

const TimeSettingsDialog = styled(DialogFrame)`
  left: 499px;
  top: 331px;
  width: 443px;
  height: 293px;
  border: 1px solid #000;
  background: linear-gradient(#98b3d2, #b9d1eb 30px);
  box-shadow: inset -1px -1px #2bd0ec, inset 1px 1px #d4e6f8;
`;

const DialogTitle = styled.div<{ $active?: boolean }>`
  display: flex;
  align-items: center;
  flex: none;
  height: 29px;
  gap: 4px;
  padding: ${({ $active }) => ($active ? '5px 2px 0 2px' : '6px 2px 0 2px')};
  box-sizing: border-box;
  color: ${({ $active }) => ($active ? '#000' : '#3d444c')};
`;

const TitleText = styled.span`
  flex: 1;
`;

const CloseButton = styled(CaptionButton)<{ $active?: boolean }>`
  ${({ $active }) =>
    $active &&
    css`
      border-color: #5b1f1b;
      background: linear-gradient(#dd9d90, #cb6c58 45%, #b23a20 50%, #c6543a);
      box-shadow: inset 0 0 0 1px #e5b0a6;
    `}
`;

const DialogBody = styled.div`
  display: flex;
  flex-direction: column;
  flex: 1;
  padding: 24px 8px 7px 6px;
  background: #f0f0f0;
`;

const TabPanel = styled.div`
  display: flex;
  flex-direction: column;
  flex: 1;
  padding: 251px 16px 32px 17px;
  border: 1px solid #898c95;
  background: #fff;
  box-shadow: 2px 1px #fff;
`;

const buttonFace = css`
  display: flex;
  align-items: center;
  justify-content: center;
  box-sizing: border-box;
  border: 1px solid #707070;
  border-radius: 3px;
  background: linear-gradient(#f3f3f3, #ebebeb 50%, #dddddd 50%, #cfcfcf);
  box-shadow: inset 0 0 0 1px #fbfbfb;
  color: #000;
`;

const ChangeButton = styled.div`
  ${buttonFace}
  align-self: flex-end;
  gap: 4px;
  width: 159px;
  height: 24px;
`;

const HelpLink = styled.a`
  margin-top: auto;
  color: #0066cc;
  text-decoration: underline;
`;

const DialogButtons = styled.div`
  display: flex;
  justify-content: flex-end;
  gap: 8px;
  margin-right: -1px;
  padding-top: 8px;
`;

const SmallButton = styled.div<{ $disabled?: boolean }>`
  ${buttonFace}
  width: 73px;
  height: 19px;
  padding-right: 2px;

  ${({ $disabled }) =>
    $disabled &&
    css`
      border-color: #adb2b5;
      background: #f4f4f4;
      color: #838383;
    `}
`;

const SettingsBody = styled.div`
  display: flex;
  flex-direction: column;
  flex: 1;
  padding: 9px 15px 17px 14px;
  background: #f0f0f0;
`;

const CheckRow = styled.div`
  display: flex;
  align-items: center;
  gap: 3px;
  margin-top: 15px;
`;

const ServerRow = styled.div`
  display: flex;
  align-items: center;
  margin: 10px 0 0 21px;
`;

const ServerLabel = styled.div`
  width: 60px;
`;

const Combo = styled.div`
  display: flex;
  align-items: center;
  justify-content: space-between;
  width: 193px;
  height: 25px;
  box-sizing: border-box;
  padding: 0 3px 0 3px;
  border: 1px solid #b5cfe7;
  border-top-color: #3d7bad;
  background: #fff;
`;

const Selected = styled.div`
  height: 17px;
  line-height: 16px;
  letter-spacing: 0.012em;
  border-right: 1px solid #d0762c;
  background: #3399ff;
  color: #fff;
`;

const UpdateButton = styled.div`
  ${buttonFace}
  flex: none;
  width: 114px;
  height: 24px;
  margin-left: 11px;
`;

const Status = styled.p`
  margin-top: 24px;
  white-space: nowrap;
`;

const LastSync = styled.p`
  margin-top: 17px;
  letter-spacing: 0.01em;
`;

const SettingsButtons = styled.div`
  display: flex;
  justify-content: flex-end;
  gap: 12px;
  margin-top: auto;
`;

const DialogButton = styled.div<{ $default?: boolean }>`
  ${buttonFace}
  width: 77px;
  height: 24px;
  padding-bottom: 1px;

  ${({ $default }) =>
    $default &&
    css`
      border-color: #3c7fb1;
      background: linear-gradient(#eaf3f8, #d9e9f1 50%, #c2d9e6 50%, #bcd4e1);
      box-shadow: inset 0 0 0 1px #41cdf5;
    `}
`;

const Overlay = styled.svg`
  position: absolute;
  left: 490px;
  top: 360px;
`;

const Mark = styled.svg`
  position: absolute;
  left: 1465px;
  top: 835px;
`;

const VolumeMeter = styled.div`
  position: absolute;
  right: 0;
  top: 975px;
  display: flex;
  flex-direction: column;
  gap: 1px;
  width: 10px;
  height: 59px;
  box-sizing: border-box;
  padding: 7px 2px 0 3px;
  border: 1px solid #2d333d;
  border-right: 0;
  border-radius: 4px 0 0 4px;
  background: #525b6b;
`;

const MeterBar = styled.div<{ $on: boolean }>`
  height: 1px;
  background: ${({ $on }) => ($on ? '#6ff0b8' : '#2b313b')};
`;
